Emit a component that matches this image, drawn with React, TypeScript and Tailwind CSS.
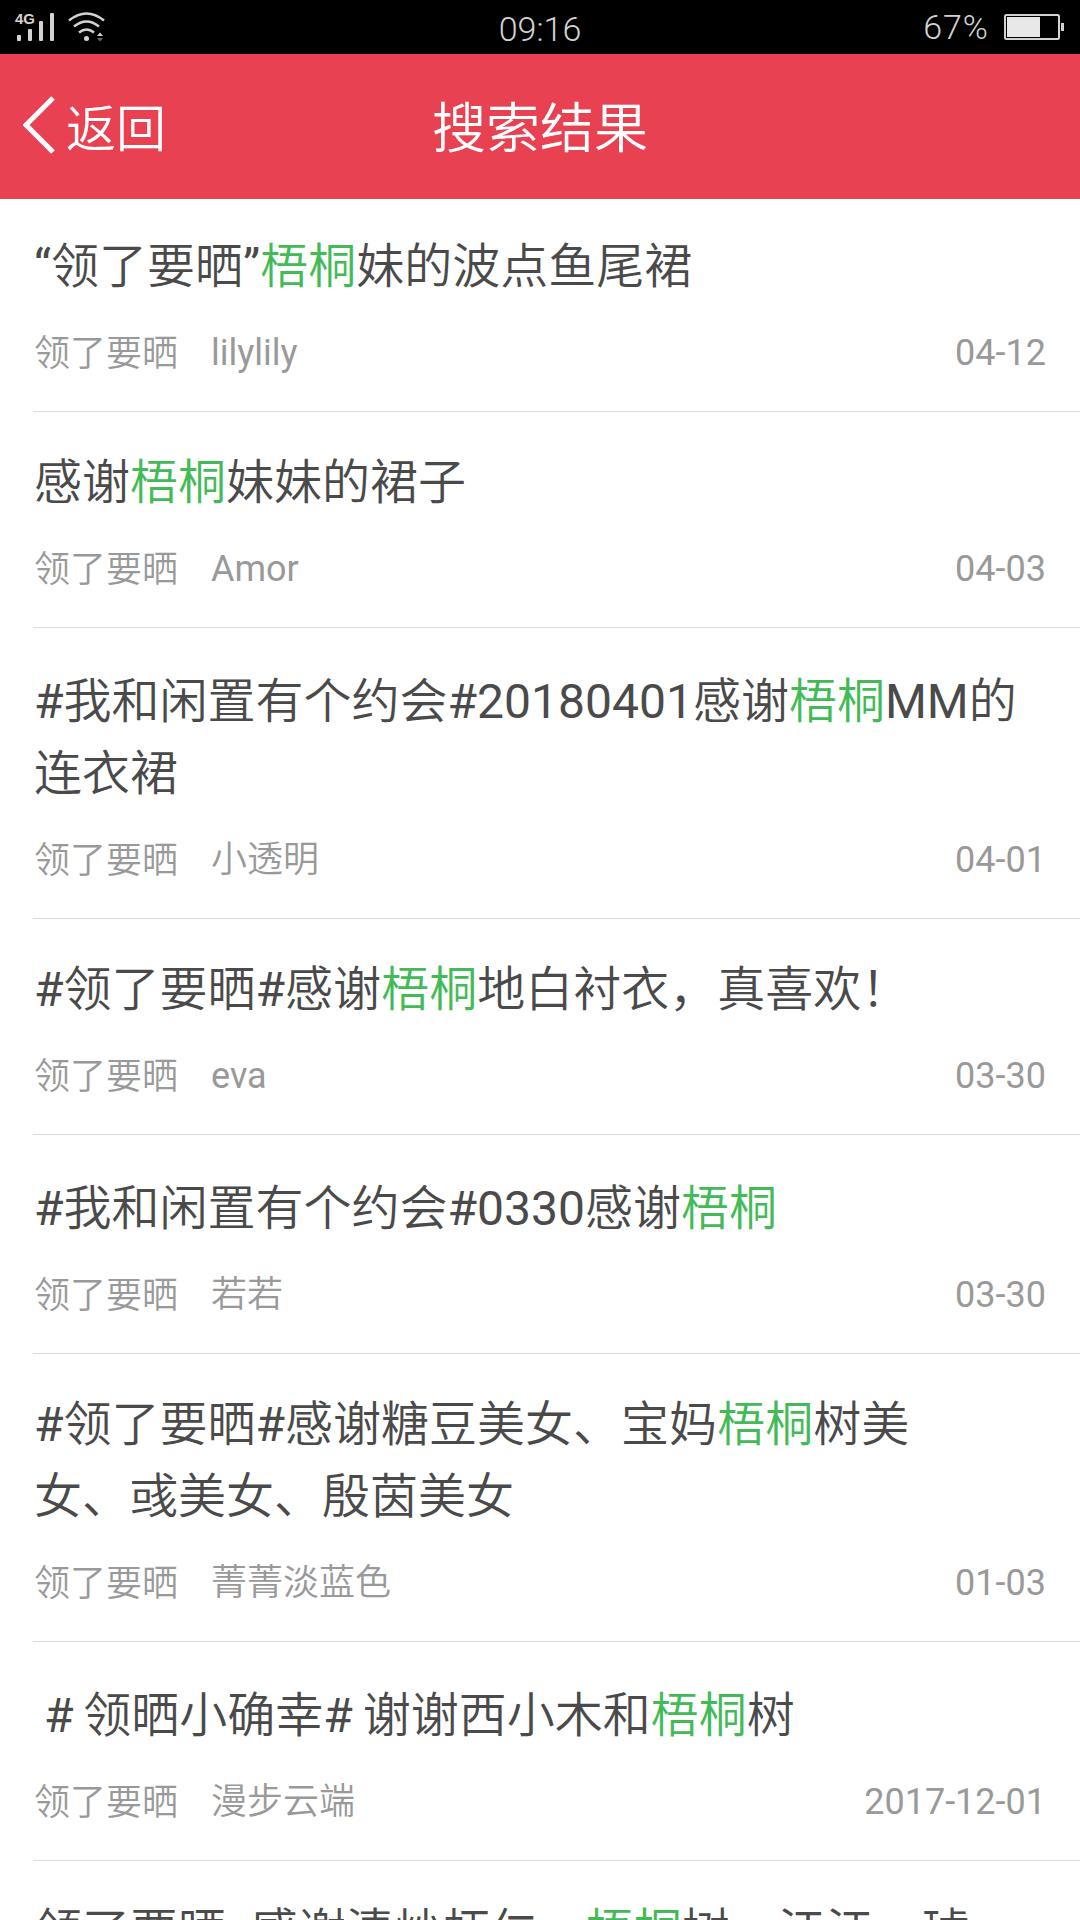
type Result = {
  title: string[];
  author: string;
  date: string;
  box: string;
};

const keyword = "梧桐";

// every item of title is one rendered line
const results: Result[] = [
  { title: ["“领了要晒”梧桐妹的波点鱼尾裙"], author: "lilylily", date: "04-12", box: "h-[213px] pt-[32px]" },
  { title: ["感谢梧桐妹妹的裙子"], author: "Amor", date: "04-03", box: "h-[216px] pt-[35px]" },
  { title: ["#我和闲置有个约会#20180401感谢梧桐MM的", "连衣裙"], author: "小透明", date: "04-01", box: "h-[291px] pt-[38px]" },
  { title: ["#领了要晒#感谢梧桐地白衬衣，真喜欢！"], author: "eva", date: "03-30", box: "h-[216px] pt-[35px]" },
  { title: ["#我和闲置有个约会#0330感谢梧桐"], author: "若若", date: "03-30", box: "h-[219px] pt-[38px]" },
  { title: ["#领了要晒#感谢糖豆美女、宝妈梧桐树美", "女、彧美女、殷茵美女"], author: "菁菁淡蓝色", date: "01-03", box: "h-[288px] pt-[35px]" },
  { title: [" # 领晒小确幸# 谢谢西小木和梧桐树"], author: "漫步云端", date: "2017-12-01", box: "h-[219px] pt-[38px] [word-spacing:-2px]" },
  { title: ["领了要晒  感谢清炒虾仁、梧桐树、江江、琥"], author: "", date: "", box: "h-[219px] pt-[35px]" },
];

const Title = ({ text }: { text: string }) => {
  const [before, after] = text.split(keyword);
  if (after === undefined) return <div>{text}</div>;
  return (
    <div>
      {before}
      <span className="text-[#42bb57]">{keyword}</span>
      {after}
    </div>
  );
};

const StatusBar = () => (
  <div className="grid h-[54px] grid-cols-3 bg-black text-[#d2d2d2]">
    <svg className="h-[54px] w-[120px]" viewBox="0 0 120 54" fill="currentColor">
      <text x="15" y="24" fontSize="15" fontWeight="700" fontFamily="Liberation Sans, sans-serif" textLength="20" lengthAdjust="spacingAndGlyphs">
        4G
      </text>
      <rect x="17" y="35" width="4" height="6" rx="1" />
      <rect x="28" y="29" width="4" height="12" rx="1" />
      <rect x="39" y="21" width="4" height="20" rx="1" />
      <rect x="50" y="13" width="4" height="28" rx="1" />
      <g fill="none" stroke="currentColor" strokeWidth="2.6">
        <path d="M69 20.500Q86.500 6.500 104 20.500" />
        <path d="M74 26.500Q86.500 16.500 99 26.500" />
        <path d="M79 32.500Q86.500 26.500 94 32.500" />
      </g>
      <circle cx="86.500" cy="38.500" r="2.500" />
      <path d="M97 36h6l-3-3.500z" />
      <path d="M97 38h6l-3 3.500z" opacity=".5" />
    </svg>
    <span className="pt-[9px] text-center font-['Roboto'] text-[34px] leading-10 font-light">09:16</span>
    <div className="flex justify-end pr-[15px]">
      <span className="pt-[7px] font-['Roboto'] text-[34px] leading-10 font-light tracking-[1px]">67%</span>
      <svg className="ml-[15px] h-[54px] w-[61px]" viewBox="0 0 61 54">
        <rect x="1" y="15" width="54" height="24" rx="1.500" fill="none" stroke="currentColor" strokeWidth="2" />
        <rect x="3" y="17" width="33" height="20" fill="#e8e8e8" />
        <rect x="57" y="23" width="3" height="8" fill="currentColor" />
      </svg>
    </div>
  </div>
);

const Header = () => (
  <header className="grid h-[145px] grid-cols-[1fr_auto_1fr] items-center bg-[#e84151] text-white">
    <div className="flex items-center pl-[23px]">
      <svg className="mr-[11px] mb-[3px] h-[60px] w-8" viewBox="0 0 32 60" fill="none" stroke="currentColor" strokeWidth="5">
        <path d="M30 3 3 30l27 27" />
      </svg>
      <span className="pt-[7px] text-[50px]">返回</span>
    </div>
    <h1 className="pt-[5px] text-[54px]">搜索结果</h1>
  </header>
);

const ResultItem = ({ item }: { item: Result }) => (
  <li className={`ml-[33px] border-b border-[#dcdcdc] pr-[34px] pl-px ${item.box}`}>
    <div className="text-[48px] leading-[72px] whitespace-pre text-[#4a4a4a]">
      {item.title.map((line) => (
        <Title key={line} text={line} />
      ))}
    </div>
    <div className="mt-[24px] flex text-[36px] leading-[52px] text-[#999]">
      <span className="pt-px">领了要晒</span>
      <span className="ml-[33px]">{item.author}</span>
      <span className="ml-auto">{item.date}</span>
    </div>
  </li>
);

const App = () => {
  return (
    <div className="h-[1920px] w-[1080px] overflow-hidden bg-white font-['Roboto','Noto_Sans_CJK_SC_DemiLight','Noto_Sans_CJK_SC',sans-serif] font-normal">
      <StatusBar />
      <Header />
      <ul>
        {results.map((item) => (
          <ResultItem key={item.title[0]} item={item} />
        ))}
      </ul>
    </div>
  );
};

export default App;
